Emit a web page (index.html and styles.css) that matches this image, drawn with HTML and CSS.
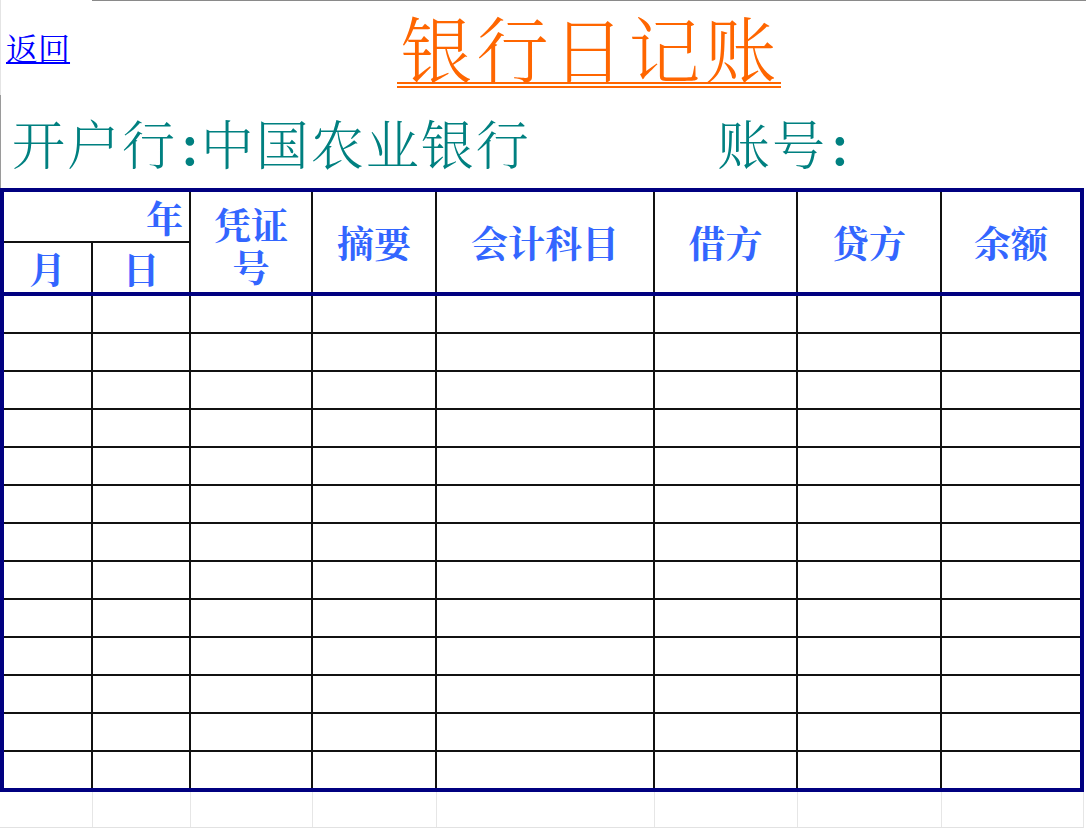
FILE: index.html
```html
<!DOCTYPE html>
<html lang="zh-CN">
<head>
<meta charset="utf-8">
<title>银行日记账</title>
<link rel="stylesheet" href="styles.css">
</head>
<body>
<div class="sheet">
  <div class="top">
    <div class="back-cell"><a class="back" href="#">返回</a></div>
    <div class="title-cell"><h1 class="title">银行日记账</h1></div>
  </div>
  <div class="info">
    <div class="bank">开户行<span class="colon">:</span>中国农业银行</div>
    <div class="acct">账号<span class="colon">:</span></div>
  </div>
  <div class="ledger">
    <div class="head">
      <div class="h year">年</div>
      <div class="h month">月</div>
      <div class="h day">日</div>
      <div class="h voucher"><span class="vl">凭证</span><span class="vl">号</span></div>
      <div class="h summary">摘要</div>
      <div class="h subject">会计科目</div>
      <div class="h debit">借方</div>
      <div class="h credit">贷方</div>
      <div class="h balance">余额</div>
    </div>
    <div class="body">
      <div></div><div></div><div></div><div></div><div></div><div></div><div></div><div></div>
      <div></div><div></div><div></div><div></div><div></div><div></div><div></div><div></div>
      <div></div><div></div><div></div><div></div><div></div><div></div><div></div><div></div>
      <div></div><div></div><div></div><div></div><div></div><div></div><div></div><div></div>
      <div></div><div></div><div></div><div></div><div></div><div></div><div></div><div></div>
      <div></div><div></div><div></div><div></div><div></div><div></div><div></div><div></div>
      <div></div><div></div><div></div><div></div><div></div><div></div><div></div><div></div>
      <div></div><div></div><div></div><div></div><div></div><div></div><div></div><div></div>
      <div></div><div></div><div></div><div></div><div></div><div></div><div></div><div></div>
      <div></div><div></div><div></div><div></div><div></div><div></div><div></div><div></div>
      <div></div><div></div><div></div><div></div><div></div><div></div><div></div><div></div>
      <div></div><div></div><div></div><div></div><div></div><div></div><div></div><div></div>
      <div></div><div></div><div></div><div></div><div></div><div></div><div></div><div></div>
    </div>
  </div>
  <div class="tail">
    <div></div><div></div><div></div><div></div><div></div><div></div><div></div><div></div>
  </div>
</div>
</body>
</html>
```

FILE: styles.css
```css
* { box-sizing: border-box; }
html, body { margin: 0; padding: 0; background: #fff; }
body {
  font-family: "Noto Serif CJK SC", "Noto Sans CJK SC", "Noto Sans", sans-serif;
  width: 1086px;
  height: 832px;
  overflow: hidden;
}
.sheet { width: 1086px; }

/* top row */
.top { display: flex; height: 95px; }
.back-cell {
  width: 92px;
  border-left: 1px solid #e4e4e4;
  padding: 29px 0 0 5px;
}
.back {
  font-size: 32px;
  line-height: 36px;
  color: #0000ff;
  text-decoration: underline;
  text-decoration-thickness: 2px;
  text-underline-offset: 1px;
}
.title-cell {
  flex: 1;
  border-top: 1px solid #8a8a8a;
  display: flex;
  justify-content: center;
  align-items: flex-start;
  padding-top: 9px;
}
.title {
  margin: 0;
  font-size: 72px;
  line-height: 72px;
  font-weight: 300;
  letter-spacing: 4px;
  padding-left: 3px;
  color: #ff6600;
  border-bottom: 6px double #ff6600;
}

/* info row */
.info {
  display: flex;
  height: 93px;
  border-left: 1px solid #9a9a9a;
  padding-top: 21px;
  color: #008080;
  font-size: 53px;
  line-height: 53px;
  font-weight: 300;
  letter-spacing: 2px;
}
.bank { width: 653px; padding-left: 11px; white-space: nowrap; }
.acct { padding-left: 63px; white-space: nowrap; }
.colon { display: inline-block; font-weight: 700; margin: 0 0 0 4px; }

/* ledger */
.ledger {
  width: 1084px;
  border: 4px solid #000080;
}
.head, .body {
  display: grid;
  grid-template-columns: 87px 98px 122px 124px 218px 143px 144px 140px;
}
.head {
  grid-template-rows: 49px 51px;
  border-bottom: 4px solid #000080;
}
.h {
  display: flex;
  align-items: center;
  justify-content: center;
  text-align: center;
  color: #3366ff;
  font-size: 37px;
  line-height: 44px;
  font-weight: 700;
  border-left: 2px solid #111;
}
.year {
  grid-column: 1 / 3;
  grid-row: 1;
  border-left: none;
  justify-content: flex-end;
  padding-right: 6px;
}
.month { grid-column: 1; grid-row: 2; border-left: none; border-top: 2px solid #111; }
.day { grid-column: 2; grid-row: 2; border-top: 2px solid #111; }
.voucher {
  grid-column: 3;
  grid-row: 1 / 3;
  flex-direction: column;
  padding-top: 6px;
}
.vl { display: block; height: 42px; line-height: 42px; overflow: visible; }
.summary { grid-column: 4; grid-row: 1 / 3; }
.subject { grid-column: 5; grid-row: 1 / 3; }
.debit { grid-column: 6; grid-row: 1 / 3; }
.credit { grid-column: 7; grid-row: 1 / 3; }
.balance { grid-column: 8; grid-row: 1 / 3; }

.body { grid-template-rows: 36px repeat(12, 38px); }
.body > div { border-left: 2px solid #111; border-top: 2px solid #111; }
.body > div:nth-child(8n+1) { border-left: none; }
.body > div:nth-child(-n+8) { border-top: none; }

/* faint spreadsheet gridlines below the table */
.tail {
  display: grid;
  grid-template-columns: 92px 98px 122px 124px 218px 143px 144px 1fr;
  width: 1084px;
  height: 36px;
  border-bottom: 1px solid #e2e2e2;
  border-right: 1px solid #e6e6e6;
}
.tail > div { border-left: 1px solid #e6e6e6; }
.tail > div:first-child { border-left: none; }
```
